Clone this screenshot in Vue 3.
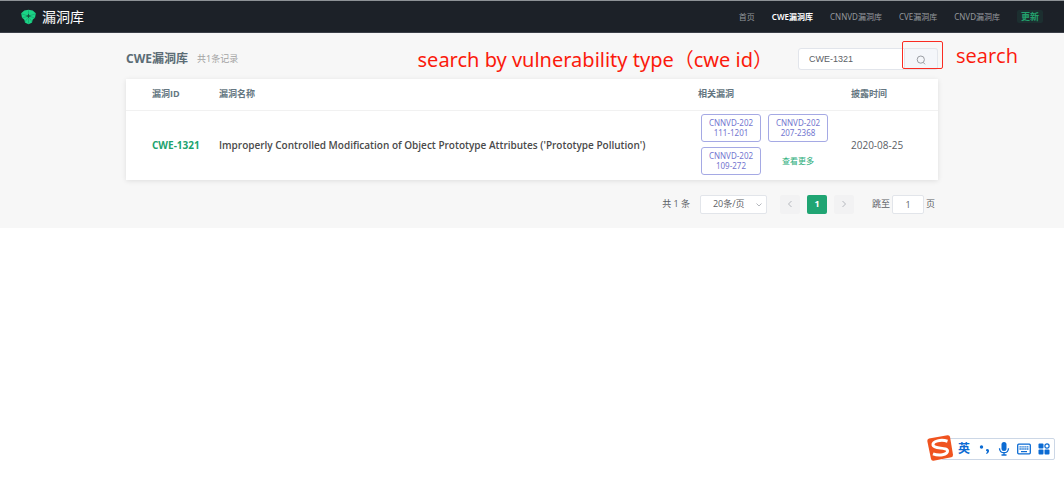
<script setup>
import { ref } from 'vue'

const keyword = ref('CWE-1321')
const pageSize = ref('20')
const jumpTo = ref('1')

const links = [
  { label: '首页' },
  { label: 'CWE漏洞库', active: true },
  { label: 'CNNVD漏洞库' },
  { label: 'CVE漏洞库' },
  { label: 'CNVD漏洞库' },
]

const rows = [
  {
    id: 'CWE-1321',
    name: "Improperly Controlled Modification of Object Prototype Attributes ('Prototype Pollution')",
    related: [
      ['CNNVD-202', '111-1201'],
      ['CNNVD-202', '207-2368'],
      ['CNNVD-202', '109-272'],
    ],
    date: '2020-08-25',
  },
]
</script>

<template>
  <div class="page">
    <header class="topbar">
      <a class="brand" href="#">
        <svg class="logo" viewBox="0 0 16 16" aria-hidden="true">
          <path d="M3.500 1 8 .3l4.500.7L15.800 4 15 8.500l-2.500 2.500-1 3L8 15.800 4.500 14l-1-3L1 8.500.2 4Z" fill="#1bd487" />
          <path d="M8 1v3M.2 4.500 6 6.300M15.800 4.500 10 6.300M1 9 6.200 7.600M15 9 9.800 7.600M4 13.500 7.300 8.800M12 13.500 8.700 8.800M8 10v5" stroke="#149a66" stroke-width=".6" fill="none" />
          <path d="m8 4 .8 2 2.200.8-2.200.8L8 9.600l-.8-2L5 6.800 7.200 6Z" fill="#16503c" />
        </svg>
        <span>漏洞库</span>
      </a>
      <nav class="nav">
        <a v-for="l in links" :key="l.label" href="#" :class="{ active: l.active }">{{ l.label }}</a>
        <a class="update" href="#">更新</a>
      </nav>
    </header>

    <main class="content">
      <div class="heading">
        <h1>CWE漏洞库</h1>
        <span class="count">共1条记录</span>
        <form class="search" @submit.prevent>
          <input v-model="keyword" type="text" aria-label="CWE" />
          <button type="submit" aria-label="搜索">
            <svg viewBox="0 0 10 10" aria-hidden="true">
              <circle cx="4.800" cy="4.600" r="3.600" /><path d="M7.200 7.400 9 9.300" />
            </svg>
          </button>
          <span class="mark"></span>
        </form>
        <span class="note note-type">search by vulnerability type（cwe id）</span>
        <span class="note note-search">search</span>
      </div>

      <div class="card">
        <table>
          <colgroup>
            <col class="c-id" /><col /><col class="c-rel" /><col class="c-date" />
          </colgroup>
          <thead>
            <tr><th>漏洞ID</th><th>漏洞名称</th><th>相关漏洞</th><th>披露时间</th></tr>
          </thead>
          <tbody>
            <tr v-for="r in rows" :key="r.id">
              <td><a class="cwe" href="#">{{ r.id }}</a></td>
              <td class="name">{{ r.name }}</td>
              <td>
                <div class="tags">
                  <a v-for="t in r.related" :key="t[1]" class="tag" href="#">{{ t[0] }}<br />{{ t[1] }}</a>
                  <a class="more" href="#">查看更多</a>
                </div>
              </td>
              <td class="date">{{ r.date }}</td>
            </tr>
          </tbody>
        </table>
      </div>

      <div class="pager">
        <span class="total">共 1 条</span>
        <div class="size">
          <select v-model="pageSize" aria-label="每页条数">
            <option value="20">20条/页</option>
          </select>
          <svg viewBox="0 0 8 8" aria-hidden="true"><path d="m1.500 2.500 2.500 2.500 2.500-2.500" /></svg>
        </div>
        <div class="pages">
          <button type="button" disabled aria-label="上一页">
            <svg viewBox="0 0 8 8" aria-hidden="true"><path d="M5.500 1 2.500 4l3 3" /></svg>
          </button>
          <button type="button" class="current">1</button>
          <button type="button" disabled aria-label="下一页">
            <svg viewBox="0 0 8 8" aria-hidden="true"><path d="m2.500 1 3 3-3 3" /></svg>
          </button>
        </div>
        <label class="jump">跳至<input v-model="jumpTo" type="text" />页</label>
      </div>
    </main>

    <div class="ime">
      <svg class="sogou" viewBox="0 0 28 28" aria-hidden="true">
        <path d="M3 4.500 21.500 1.200q2-.3 2.500 1.600l3 18q.2 2-1.700 2.500L7.500 26.800q-2 .3-2.500-1.700L1.300 7q-.2-2 1.700-2.500Z" fill="#f0531f" />
        <path d="M21.500 7.200C15 5.200 6.500 7 7 11c.5 4.500 14.500 1.800 14.500 6 0 3.800-8.500 5-14.500 2.800" fill="none" stroke="#fff" stroke-width="3" />
      </svg>
      <span class="lang">英</span>
      <svg class="punct" viewBox="0 0 12 14" aria-hidden="true">
        <circle cx="2.500" cy="5" r="1.700" /><path d="M7 7.500q1.600-1.200 2.800.2 1 2.300-2 4.300l-.8-.8q1.300-.8 1.200-1.700Q6.500 9.200 7 7.500Z" />
      </svg>
      <svg class="mic" viewBox="0 0 12 14" aria-hidden="true">
        <rect x="3.500" y="0" width="5" height="9" rx="2.500" />
        <path d="M1.500 6.200c.2 6 8.800 6 9 0M6 10.500V13M3.500 13h5" fill="none" stroke="#0b6bd3" stroke-width="1.300" />
      </svg>
      <svg class="keys" viewBox="0 0 14 12" aria-hidden="true">
        <rect x=".7" y="1.200" width="12.600" height="9.600" rx="1" fill="#fff" stroke="#0b6bd3" stroke-width="1.300" />
        <path d="M2.500 3.800h9M2.500 6h9" stroke="#0b6bd3" stroke-width="1.300" stroke-dasharray="1.300 .6" /><path d="M4 8.600h6" stroke="#0b6bd3" stroke-width="1.200" />
      </svg>
      <svg class="apps" viewBox="0 0 12 12" aria-hidden="true">
        <rect x=".5" y=".5" width="5" height="5" rx="1" /><circle cx="9" cy="3" r="2.100" fill="none" stroke="#0b6bd3" stroke-width="1.200" />
        <rect x=".5" y="6.500" width="5" height="5" rx="1" /><rect x="6.500" y="6.500" width="5" height="5" rx="1" />
      </svg>
    </div>
  </div>
</template>

<style>
body { background: #fff; }
</style>

<style scoped>
* { box-sizing: border-box; }
.page {
  font-family: "Open Sans", "Noto Sans CJK SC", sans-serif;
  font-size: 9px;
  line-height: 12px;
  color: #5c6065;
}
.nav, h1, .count, .note-type, .tag {
  font-family: "Noto Sans", "Noto Sans CJK SC", sans-serif;
}
a { color: inherit; text-decoration: none; }
input, button, select { font: inherit; color: inherit; margin: 0; }
svg { display: block; flex: none; }

.topbar {
  height: 33px;
  display: flex;
  align-items: center;
  justify-content: space-between;
  padding: 0 21px;
  background: #1c2128;
  border-top: 1px solid #8d9296;
  border-bottom: 1px solid #3b3f48;
}
.brand {
  display: flex;
  align-items: center;
  gap: 6px;
  color: #fff;
  font-size: 14px;
  line-height: 20px;
}
.logo { width: 15px; height: 16px; }
.nav {
  display: flex;
  align-items: center;
  gap: 17px;
  font-size: 8px;
  color: #94989d;
}
.active { color: #fff; font-weight: 600; }
.update {
  padding: 0 4px;
  border-radius: 2px;
  background: #1c2f30;
  color: #23a06c;
  font-size: 9px;
  line-height: 13px;
  font-weight: 700;
}

.content { background: #f7f7f7; padding: 14px 126px 14px; }
.heading {
  position: relative;
  display: flex;
  align-items: center;
  height: 24px;
  margin-bottom: 8px;
}
h1 { margin: 0; font-size: 12px; line-height: 18px; font-weight: 700; color: #5b6c75; }
.count { margin-left: 9px; color: #a3a3a3; }
.search { position: relative; display: flex; width: 140px; height: 22px; margin-left: auto; }
.search input {
  flex: 1;
  min-width: 0;
  padding: 0 10px;
  border: 1px solid #e2e5eb;
  border-radius: 3px 0 0 3px;
  background: #fff;
  font-family: "Liberation Sans", sans-serif;
}
.search button {
  display: grid;
  place-items: center;
  width: 33px;
  padding: 2px 0 0;
  border: 1px solid #e2e5eb;
  border-left: 0;
  border-radius: 0 3px 3px 0;
  background: #f4f6fa;
}
.search svg { width: 10px; height: 10px; fill: none; stroke: #9a9da3; }
.mark {
  position: absolute;
  top: -7px;
  right: -5px;
  width: 41px;
  height: 28px;
  border: 1px solid #fa2c22;
  border-radius: 2px;
  pointer-events: none;
}
.note {
  position: absolute;
  color: #fb1a0c;
  font-size: 20px;
  line-height: 28px;
  white-space: nowrap;
}
.note-type { right: 165px; top: -1px; }
.note-search { left: 100%; margin-left: 18px; top: -5px; }

.card { background: #fff; box-shadow: 0 1px 5px rgba(0, 0, 0, 0.1); }
table { width: 100%; table-layout: fixed; border-collapse: collapse; }
.c-id { width: 93px; }
.c-rel { width: 153px; }
.c-date { width: 87px; }
th, td { padding: 0; text-align: left; vertical-align: middle; }
th { height: 31px; font-weight: 700; color: #647681; border-bottom: 1px solid #f1f1f1; }
td { height: 70px; }
th:first-child, td:first-child { padding-left: 26px; }
.cwe { color: #20a36e; font-size: 10px; font-weight: 700; }
.name { font-weight: 600; color: #4a4a4a; font-size: 10px; white-space: nowrap; }
.tags { display: grid; grid-template-columns: 60px 60px; gap: 5px 7px; padding: 0 0 2px 3px; }
.tag {
  height: 28px;
  padding: 3px 0;
  border: 1px solid #a5a9e4;
  border-radius: 3px;
  color: #7376cf;
  font-size: 8px;
  line-height: 10px;
  text-align: center;
}
.more { place-self: center; font-size: 8px; color: #2bae7b; }
.date { font-size: 10px; }

.pager {
  display: flex;
  justify-content: flex-end;
  align-items: center;
  height: 20px;
  margin-top: 14px;
  padding-right: 3px;
}
.size { position: relative; width: 67px; height: 19px; margin-left: 10px; }
select {
  appearance: none;
  width: 100%;
  height: 100%;
  padding: 0 12px;
  border: 1px solid #e2e5ea;
  border-radius: 2px;
  background: #fff;
}
.size svg { position: absolute; right: 4px; top: 6px; width: 8px; height: 8px; }
.pager svg { fill: none; stroke: #b5b8be; stroke-width: 1; }
.pages { display: flex; gap: 7px; margin-left: 13px; }
.pages button {
  display: grid;
  place-items: center;
  width: 20px;
  height: 19px;
  padding: 0;
  border: 0;
  border-radius: 2px;
  background: #f2f2f3;
}
.pages svg { width: 8px; height: 8px; }
.pages .current { background: #20a573; color: #fff; font-weight: 700; }
.jump { display: flex; align-items: center; margin-left: 18px; }
.jump input {
  width: 32px;
  height: 19px;
  margin: 0 2px;
  padding: 0;
  border: 1px solid #e2e5ea;
  border-radius: 2px;
  background: #fff;
  text-align: center;
}

.ime {
  position: fixed;
  right: 9px;
  bottom: 40px;
  display: flex;
  align-items: center;
  width: 114px;
  height: 22px;
  padding: 0 4px 0 0;
  border: 1px solid #ccd7e6;
  border-radius: 2px;
  background: #fff;
  color: #0b6bd3;
  fill: #0b6bd3;
}
.sogou { width: 28px; height: 28px; margin: -3px 4px 0 -16px; }
.lang { font-size: 12px; line-height: 18px; font-weight: 700; }
.punct { width: 12px; height: 14px; margin-left: 9px; }
.mic { width: 12px; height: 14px; margin-left: 7px; }
.keys { width: 14px; height: 12px; margin-left: 7px; }
.apps { width: 12px; height: 12px; margin-left: 7px; }
</style>
